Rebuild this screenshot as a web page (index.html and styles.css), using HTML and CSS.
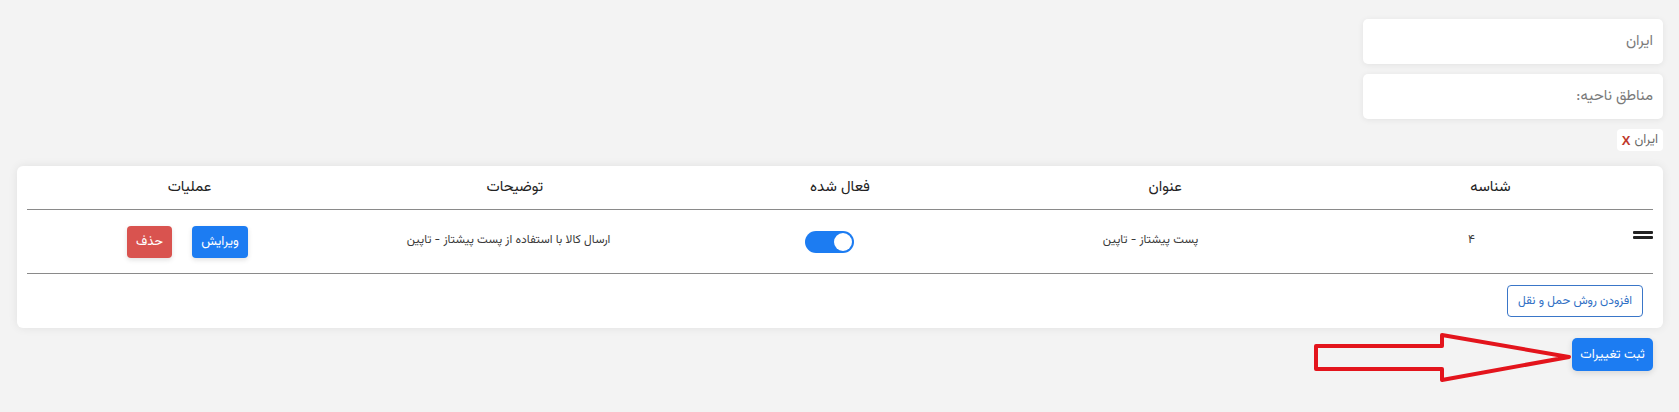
FILE: index.html
```html
<!DOCTYPE html>
<html lang="fa" dir="rtl">
<head>
<meta charset="utf-8">
<title>روش‌های حمل و نقل</title>
<link rel="stylesheet" href="styles.css">
</head>
<body>
<div class="page">
  <div class="filters">
    <input class="field" type="text" placeholder="ایران">
    <input class="field" type="text" placeholder="مناطق ناحیه:">
    <div class="tags"><span class="tag">ایران <b class="tag-x">X</b></span></div>
  </div>

  <div class="card">
    <div class="thead">
      <div class="th">شناسه</div>
      <div class="th">عنوان</div>
      <div class="th">فعال شده</div>
      <div class="th">توضیحات</div>
      <div class="th">عملیات</div>
    </div>
    <div class="trow">
      <div class="handle"><span></span><span></span></div>
      <div class="td">۴</div>
      <div class="td">پست پیشتاز - تاپین</div>
      <div class="td td-toggle"><span class="toggle"><span class="knob"></span></span></div>
      <div class="td">ارسال کالا با استفاده از پست پیشتاز - تاپین</div>
      <div class="td ops">
        <button class="btn btn-blue">ویرایش</button>
        <button class="btn btn-red">حذف</button>
      </div>
    </div>
    <div class="foot">
      <button class="btn-outline">افزودن روش حمل و نقل</button>
    </div>
  </div>

  <div class="actions">
    <button class="btn-submit">ثبت تغییرات</button>
    <svg class="arrow" viewBox="0 0 258 50" aria-hidden="true">
      <polygon points="2,13 128,13 128,2 255,24 128,47 128,36 2,36" fill="none" stroke="#e3141c" stroke-width="4" stroke-linejoin="round"/>
    </svg>
  </div>
</div>
</body>
</html>
```

FILE: styles.css
```css
* { box-sizing: border-box; }

html, body {
  margin: 0;
  background: #f3f3f3;
}

body {
  font-family: "Vazirmatn", "Noto Sans Arabic", "DejaVu Sans", sans-serif;
  color: #212529;
}

.page {
  padding: 19px 16px 0 17px;
}

.filters {
  width: 300px;
  display: flex;
  flex-direction: column;
  align-items: flex-start;
  gap: 10px;
}

.field {
  display: block;
  width: 100%;
  height: 45px;
  border: none;
  border-radius: 5px;
  background: #fff;
  box-shadow: 0 1px 6px rgba(0, 0, 0, 0.07);
  padding: 0 10px;
  font-family: inherit;
  font-size: 15px;
  color: #777;
  outline: none;
}

.field::placeholder {
  color: #7a7a7a;
}

.tags {
  display: flex;
  height: 22px;
}

.tag {
  display: flex;
  align-items: center;
  gap: 4px;
  height: 22px;
  padding: 0 5px;
  background: #fff;
  border-radius: 4px;
  font-size: 13px;
  color: #6a6a6a;
}

.tag-x {
  font-family: "Liberation Sans", sans-serif;
  font-weight: bold;
  font-size: 13px;
  color: #c0392b;
}

.card {
  margin-top: 15px;
  background: #fff;
  border-radius: 6px;
  box-shadow: 0 0 10px rgba(0, 0, 0, 0.08);
  padding: 0 10px 11px;
}

.thead {
  display: flex;
  align-items: center;
  height: 44px;
  border-bottom: 1px solid #8a8a8a;
}

.th {
  flex: 1;
  text-align: center;
  font-size: 15px;
  color: #222;
}

.trow {
  display: flex;
  align-items: center;
  height: 64px;
  border-bottom: 1px solid #8a8a8a;
}

.handle {
  flex: none;
  width: 21px;
  display: flex;
  flex-direction: column;
  align-items: flex-start;
  gap: 2px;
  margin-top: -13px;
}

.handle span {
  display: block;
  width: 20px;
  height: 3px;
  background: #222;
  border-radius: 1px;
}

.td {
  flex: 1;
  text-align: center;
  font-size: 12px;
  color: #3a3a3a;
  display: flex;
  justify-content: center;
  align-items: center;
  margin-top: -4px;
}

.td.ops,
.td.td-toggle {
  margin-top: 0;
}

.td.ops {
  gap: 20px;
}

.toggle {
  display: flex;
  justify-content: flex-start;
  align-items: center;
  width: 49px;
  height: 22px;
  border-radius: 11px;
  background: #1c7cf2;
  padding: 0 2px;
}

.knob {
  width: 18px;
  height: 18px;
  border-radius: 50%;
  background: #fff;
}

.btn {
  height: 32px;
  border: none;
  border-radius: 4px;
  color: #fff;
  font-family: inherit;
  font-size: 13px;
  padding: 0 8px;
  box-shadow: 0 2px 5px rgba(0, 0, 0, 0.12);
}

.btn-blue {
  width: 56px;
  background: #1c7cf2;
}

.btn-red {
  width: 45px;
  background: #d9534f;
}

.foot {
  padding-top: 11px;
  display: flex;
}

.btn-outline {
  margin-inline-start: 10px;
  height: 32px;
  width: 136px;
  border: 1px solid #3a76c8;
  border-radius: 4px;
  background: #fff;
  color: #2f6fc4;
  font-family: inherit;
  font-size: 12px;
  padding: 0 6px;
}

.actions {
  position: relative;
  display: flex;
  padding-top: 10px;
  height: 70px;
}

.btn-submit {
  margin-inline-start: 10px;
  width: 81px;
  height: 33px;
  border: none;
  border-radius: 5px;
  background: #1c7cf2;
  color: #fff;
  font-family: inherit;
  font-size: 13px;
  box-shadow: 0 2px 6px rgba(0, 0, 0, 0.12);
}

.arrow {
  position: absolute;
  display: block;
  top: 5px;
  right: 91px;
  width: 258px;
  height: 50px;
  overflow: visible;
}
```
